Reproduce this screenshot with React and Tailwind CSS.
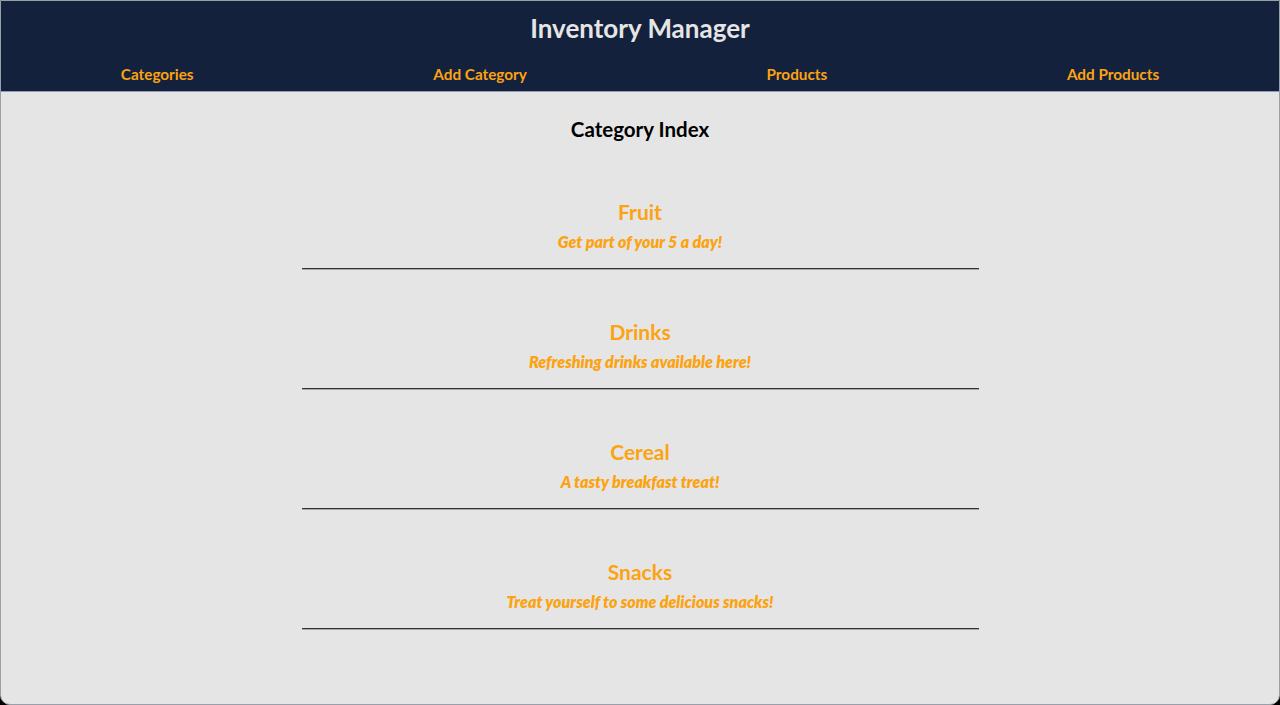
export default function App() {
  const cats = [
    { name: "Fruit", desc: "Get part of your 5 a day!" },
    { name: "Drinks", desc: "Refreshing drinks available here!" },
    { name: "Cereal", desc: "A tasty breakfast treat!" },
    { name: "Snacks", desc: "Treat yourself to some delicious snacks!" },
  ];
  const links = ["Categories", "Add Category", "Products", "Add Products"];
  return (
    <div className="bg-black h-[705px] w-[1280px]" style={{ fontFamily: "Lato, 'Open Sans', sans-serif" }}>
      <div className="h-full flex flex-col bg-[#e5e5e5] border border-[#9aa0aa] rounded-b-[10px] overflow-hidden">
        <header className="bg-[#14213d] h-[91px] flex flex-col border-b border-[#8d9bb5]">
          <h1 className="text-[26px] font-bold text-[#e5e5e5] text-center leading-[32px] mt-[11px]">Inventory Manager</h1>
          <nav className="flex justify-around mt-[20px]">
            {links.map((l) => (
              <a key={l} className="text-[#fca311] font-bold text-[15.3px] leading-[20px]">{l}</a>
            ))}
          </nav>
        </header>
        <main className="flex flex-col items-center">
          <h2 className="text-[20.5px] font-bold text-black leading-[28px] mt-[23px]">Category Index</h2>
          <div className="flex flex-col items-center w-[677px] mt-[57px]">
            {cats.map((c) => (
              <div key={c.name} className="w-full flex flex-col items-center mb-[50px]">
                <div className="text-[#fca311] text-[21px] font-bold leading-[24px]">{c.name}</div>
                <div className="text-[#fca311] text-[16px] font-extrabold italic leading-[20px] mt-[8px]">{c.desc}</div>
                <div className="w-full mt-[16px] border-t border-[#333] border-b border-b-[#a9a9a9]" />
              </div>
            ))}
          </div>
        </main>
      </div>
    </div>
  );
}
